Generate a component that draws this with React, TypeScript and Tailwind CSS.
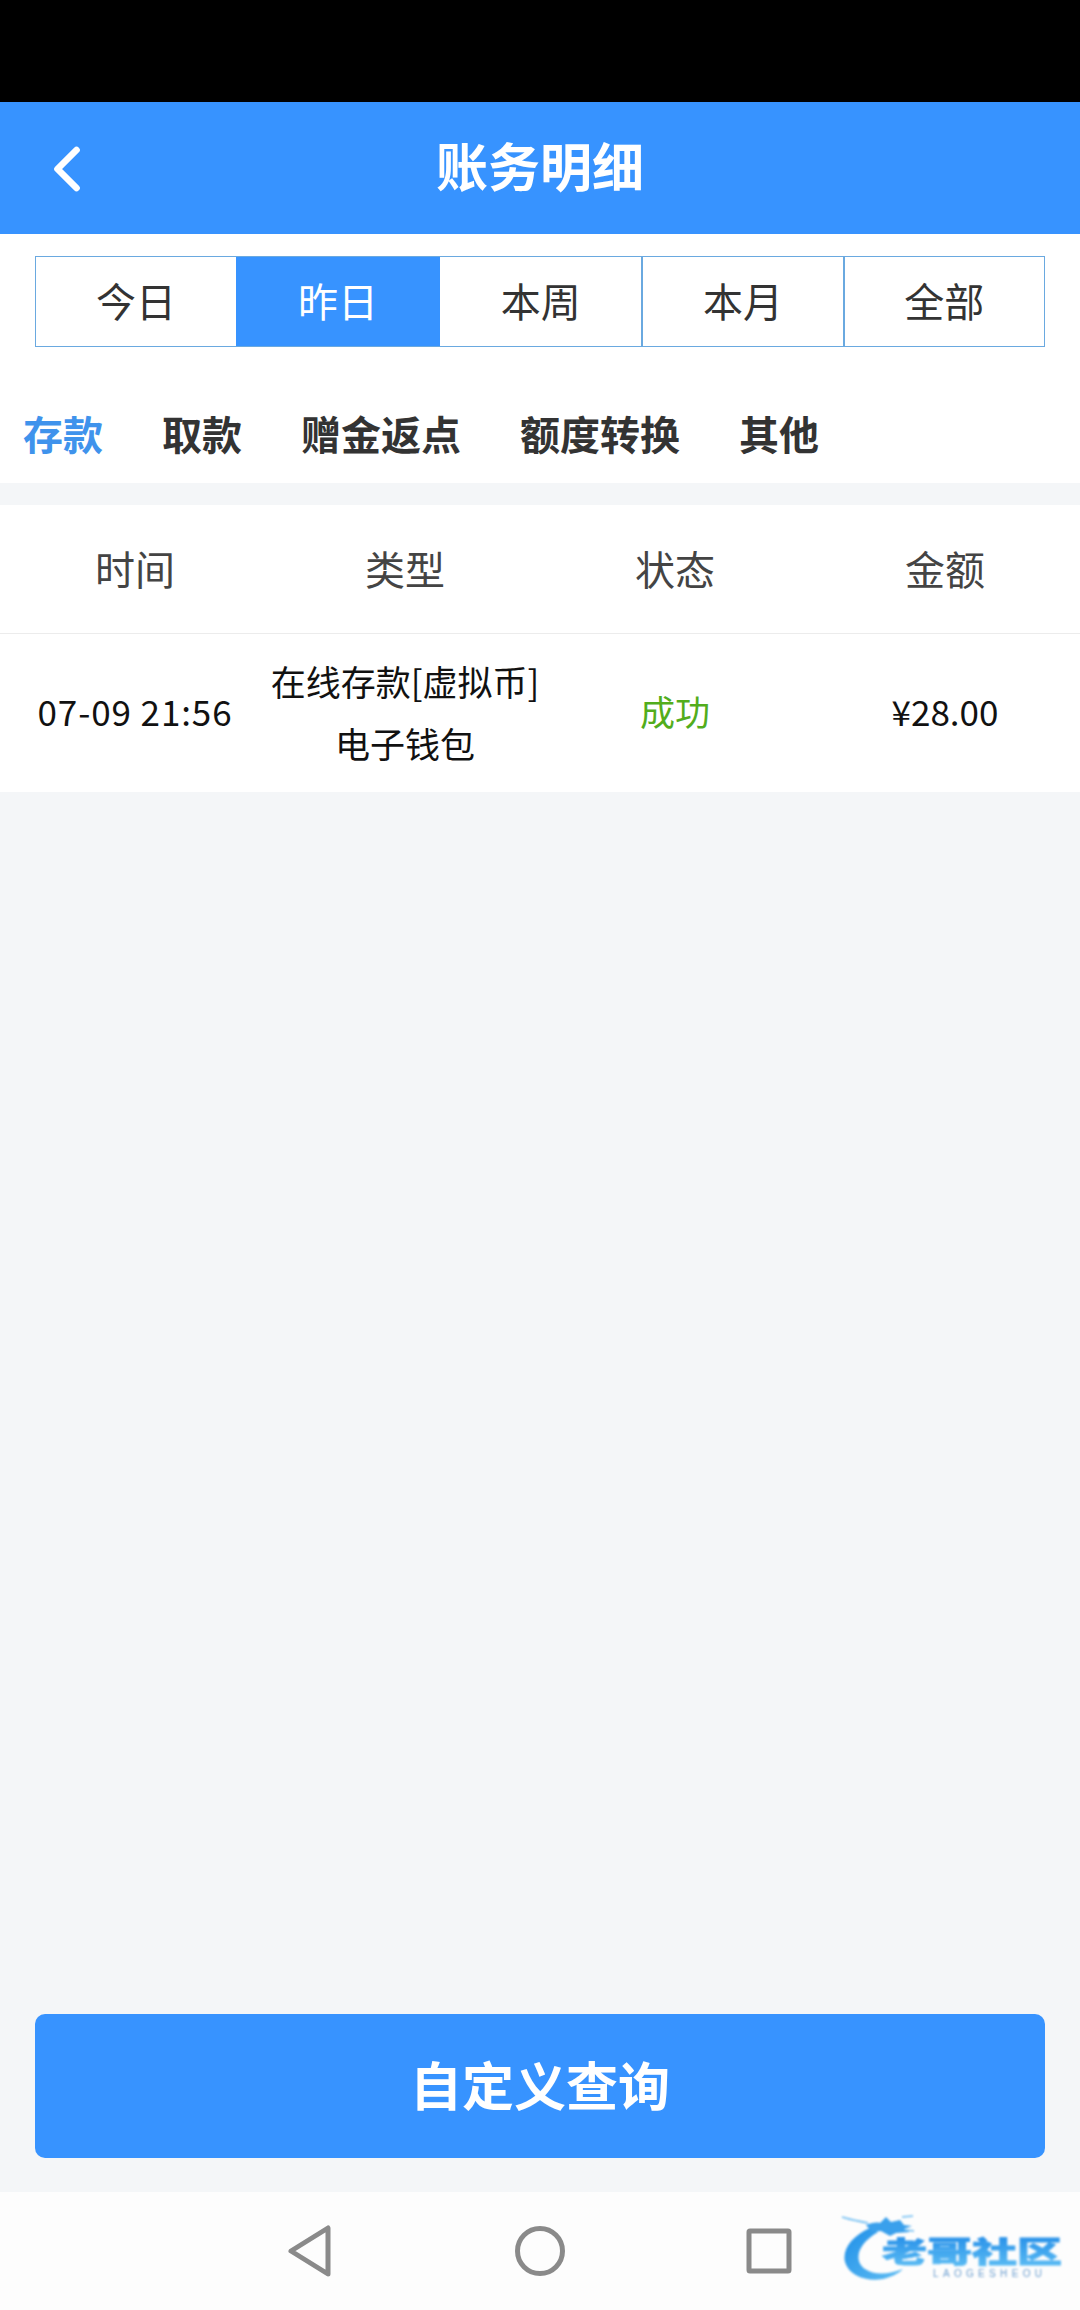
import { ChevronLeft } from 'lucide-react';

const ranges = ['今日', '昨日', '本周', '本月', '全部'];
const categories = ['存款', '取款', '赠金返点', '额度转换', '其他'];
const columns = ['时间', '类型', '状态', '金额'];

const CJK = "font-['Noto_Sans_CJK_SC',sans-serif]";

const Logo = () => (
  <svg className="absolute left-[836px] top-[16px] blur-[0.8px]" width="236" height="80" viewBox="0 0 236 80">
    <defs>
      <linearGradient id="logoText" x1="0" y1="0" x2="0" y2="1">
        <stop offset="0" stopColor="#1c86e6" />
        <stop offset="1" stopColor="#62c2f5" />
      </linearGradient>
      <linearGradient id="logoBody" x1="0" y1="0" x2="1" y2="1">
        <stop offset="0" stopColor="#1f8fe8" />
        <stop offset="1" stopColor="#5fbdf3" />
      </linearGradient>
    </defs>
    {/* dragon body */}
    <path d="M34 20C16 28 6 41 9 54c4 14 22 20 38 17 8-2 15-5 20-10-13 5-28 7-38 0C18 53 20 37 42 24Z" fill="url(#logoBody)" />
    {/* dragon head and whiskers */}
    <path d="M30 17c5-2 10-3 14-2l6-6 5 5 9-2 4 5 8 1-8 3 6 3-14 1-6 3-9-5-9 1Z" fill="#3aa0ec" />
    <path d="M6 9c9 3 17 4 26 6M66 9l11-1M70 22l8 1" stroke="#6cbcf2" strokeWidth="1.6" fill="none" />
    <text x="46" y="55" textLength="180" lengthAdjust="spacingAndGlyphs" fontSize="29" fontWeight="900" fill="url(#logoText)" stroke="url(#logoText)" strokeWidth="0.8" fontFamily="'Noto Sans CJK SC', sans-serif">老哥社区</text>
    <text x="97" y="69" textLength="109" lengthAdjust="spacing" fontSize="10" fill="#6d9fd0" fontFamily="'Liberation Sans', sans-serif">LAOGESHEOU</text>
  </svg>
);

export default function App() {
  return (
    <div className={`flex h-[2310px] w-[1080px] flex-col overflow-hidden bg-[#f4f6f8] ${CJK}`}>
      <div className="h-[102px] bg-black" />

      <header className="relative flex h-[132px] items-center justify-center bg-[#3793ff] pb-[6px]">
        <ChevronLeft className="absolute left-[29px] top-[29px] text-white" size={76} strokeWidth={2.1} />
        <h1 className="text-[52px] font-bold leading-none text-white">账务明细</h1>
      </header>

      <div className="bg-white">
        <div className="px-[35px] pt-[22px]">
          <div className="grid h-[91px] grid-cols-[200px_204px_1fr_1fr_1fr] border border-[#6aa9e0]">
            {ranges.map((item, i) => (
              <div
                key={item}
                className={`flex items-center justify-center pb-[4px] text-[40px] ${
                  i === 1 ? 'bg-[#3793ff] text-white' : 'text-[#333333]'
                } ${i > 2 ? 'border-l-2 border-[#6aa9e0]' : ''}`}
              >
                {item}
              </div>
            ))}
          </div>
        </div>

        <nav className="flex h-[136px] items-center gap-[59px] pl-[23px] pt-[36px]">
          {categories.map((item, i) => (
            <span key={item} className={`text-[40px] font-bold ${i === 0 ? 'text-[#3f93ec]' : 'text-[#333333]'}`}>
              {item}
            </span>
          ))}
        </nav>
      </div>

      <div className="mt-[22px] bg-white">
        <div className="grid h-[129px] grid-cols-4 items-center border-b border-[#ececec] pb-[3px]">
          {columns.map(item => (
            <div key={item} className="text-center text-[40px] text-[#444444]">{item}</div>
          ))}
        </div>
        <div className="grid h-[158px] grid-cols-4 items-center pb-[3px] text-center text-[35px] text-[#111111]">
          <div className="tracking-[0.9px]">07-09 21:56</div>
          <div className="whitespace-nowrap leading-[62px]">
            <div>在线存款[虚拟币]</div>
            <div>电子钱包</div>
          </div>
          <div className="text-[#52ad1c]">成功</div>
          <div>¥28.00</div>
        </div>
      </div>

      <div className="flex-1" />

      <div className="px-[35px] pb-[34px]">
        <button className="flex h-[144px] w-full items-center justify-center rounded-[10px] bg-[#3793ff] pb-[4px] text-[52px] font-bold text-white">
          自定义查询
        </button>
      </div>

      <div className="relative flex h-[118px] items-center justify-center gap-[181px] bg-[#fdfdfd] pr-[3px]">
        <svg width="48" height="54" viewBox="0 0 48 54" fill="none" stroke="#8a8a8a" strokeWidth="5" strokeLinejoin="round">
          <path d="M42 4v46L5 27Z" />
        </svg>
        <svg width="50" height="50" viewBox="0 0 50 50" fill="none" stroke="#8a8a8a" strokeWidth="5">
          <circle cx="25" cy="25" r="22.5" />
        </svg>
        <svg width="46" height="46" viewBox="0 0 46 46" fill="none" stroke="#8a8a8a" strokeWidth="5" strokeLinejoin="round">
          <rect x="3" y="3" width="40" height="40" rx="1" />
        </svg>
        <Logo />
      </div>
    </div>
  );
}
